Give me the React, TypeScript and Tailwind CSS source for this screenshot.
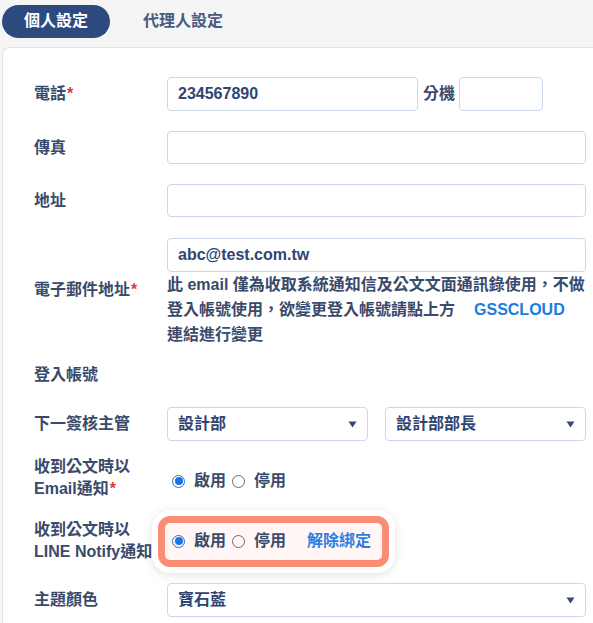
import React, { useState } from 'react';

const font = { fontFamily: '"Liberation Sans", "Noto Sans CJK TC", sans-serif' };

function Req() {
    return <span className="text-[#e53935] ml-[1px]">*</span>;
}

function Caret() {
    return (
        <svg className="w-[9px] h-[7px]" viewBox="0 0 9 7">
            <path d="M0.5 0.5 L8.5 0.5 L4.5 6.5 Z" fill="#34497a" />
        </svg>
    );
}

function Select({ value, className = '' }: { value: string; className?: string }) {
    return (
        <div className={`h-[34px] rounded-[4px] border border-[#cbd8ec] bg-white flex items-center justify-between pl-[10px] pr-[10px] ${className}`}>
            <span className="text-[#2f4573]">{value}</span>
            <Caret />
        </div>
    );
}

function Radio({ checked, onClick }: { checked: boolean; onClick: () => void }) {
    return (
        <button
            type="button"
            onClick={onClick}
            className={`w-[13px] h-[13px] rounded-full border flex items-center justify-center ml-[5px] mr-[9px] ${checked ? 'border-[#1a73e8]' : 'border-[#6b6b6b]'}`}
        >
            {checked && <span className="w-[8px] h-[8px] rounded-full bg-[#1a73e8]" />}
        </button>
    );
}

function RadioGroup({ value, onChange }: { value: boolean; onChange: (v: boolean) => void }) {
    return (
        <div className="flex items-center">
            <Radio checked={value} onClick={() => onChange(true)} />
            <span className="text-[#3a4a6b] mr-[1px]">啟用</span>
            <Radio checked={!value} onClick={() => onChange(false)} />
            <span className="text-[#3a4a6b]">停用</span>
        </div>
    );
}

export default function App() {
    const [tab, setTab] = useState('personal');
    const [email, setEmail] = useState(true);
    const [line, setLine] = useState(true);

    return (
        <div lang="zh-Hant-TW" className="w-[593px] h-[623px] overflow-hidden bg-[#f5f5f5] font-semibold" style={font}>
            {/* tabs */}
            <div className="flex items-center h-[47px] pl-[2px] pb-[8px] pt-[3px]">
                <button
                    onClick={() => setTab('personal')}
                    className={`h-[33px] w-[108px] rounded-full text-[16px] font-bold ${tab === 'personal' ? 'bg-[#2c4a7e] text-white' : 'text-[#4a5a80]'}`}
                >
                    個人設定
                </button>
                <button
                    onClick={() => setTab('agent')}
                    className={`h-[33px] ml-[11px] px-[22px] rounded-full text-[16px] ${tab === 'agent' ? 'bg-[#2c4a7e] text-white font-bold' : 'text-[#4a5a80]'}`}
                >
                    代理人設定
                </button>
            </div>

            {/* card */}
            <div className="ml-[2px] w-[620px] h-[600px] bg-white border-l border-t border-[#e2e2e2] rounded-tl-[8px] pl-[31px] pr-[36px] pt-[29px] text-[16px] text-[#3a4a6b]">
                <div className="flex flex-col">
                    <div className="flex items-center">
                        <div className="w-[133px]">電話<Req /></div>
                        <input
                            defaultValue="234567890"
                            className="h-[34px] w-[251px] rounded-[4px] border border-[#cbd8ec] px-[10px] text-[#2f4573] outline-none"
                        />
                        <span className="ml-[5px] mr-[4px]">分機</span>
                        <input className="h-[34px] w-[84px] rounded-[4px] border border-[#cbd8ec] px-[8px] outline-none" />
                    </div>

                    <div className="flex items-center mt-[20px]">
                        <div className="w-[133px]">傳真</div>
                        <input className="h-[33px] flex-1 rounded-[4px] border border-[#cbd8ec] px-[10px] outline-none" />
                    </div>

                    <div className="flex items-center mt-[20px]">
                        <div className="w-[133px]">地址</div>
                        <input className="h-[33px] flex-1 rounded-[4px] border border-[#cbd8ec] px-[10px] outline-none" />
                    </div>

                    <div className="flex items-center mt-[21px]">
                        <div className="w-[133px] pb-[6px]">電子郵件地址<Req /></div>
                        <div className="flex-1">
                            <input
                                defaultValue="abc@test.com.tw"
                                className="h-[34px] w-full rounded-[4px] border border-[#cbd8ec] px-[10px] text-[#2f4573] outline-none"
                            />
                            <div className="leading-[25px] whitespace-nowrap">
                                <div>此 email 僅為收取系統通知信及公文文面通訊錄使用，不做</div>
                                <div>
                                    登入帳號使用，欲變更登入帳號請點上方
                                    <a href="#" className="text-[#1a7de0] font-bold ml-[19px]">GSSCLOUD</a>
                                </div>
                                <div>連結進行變更</div>
                            </div>
                        </div>
                    </div>

                    <div className="flex items-center mt-[17px] h-[22px]">
                        <div className="w-[133px]">登入帳號</div>
                    </div>

                    <div className="flex items-center mt-[21px]">
                        <div className="w-[133px]">下一簽核主管</div>
                        <div className="flex-1 grid grid-cols-2 gap-[17px]">
                            <Select value="設計部" />
                            <Select value="設計部部長" />
                        </div>
                    </div>

                    <div className="flex items-center mt-[15px]">
                        <div className="w-[133px] leading-[22px]">
                            收到公文時以<br />Email通知<Req />
                        </div>
                        <div className="pt-[6px]">
                            <RadioGroup value={email} onChange={setEmail} />
                        </div>
                    </div>

                    <div className="flex items-center mt-[19px]">
                        <div className="w-[133px] leading-[22px] whitespace-nowrap">
                            收到公文時以<br />LINE Notify通知
                        </div>
                        <div className="-ml-[15px] -my-[10px] relative rounded-[18px] bg-white p-[6px] shadow-[0_2px_10px_rgba(0,0,0,0.12)]">
                            <div className="rounded-[12px] border-[7px] border-[#fb8d74] bg-[#fff6f5] h-[51px] pl-[2px] pr-[11px] flex items-center">
                                <RadioGroup value={line} onChange={setLine} />
                                <a href="#" className="ml-[21px] text-[#2f7de1]">解除綁定</a>
                            </div>
                        </div>
                    </div>

                    <div className="flex items-center mt-[20px]">
                        <div className="w-[133px]">主題顏色</div>
                        <Select value="寶石藍" className="flex-1" />
                    </div>
                </div>
            </div>
        </div>
    );
}
